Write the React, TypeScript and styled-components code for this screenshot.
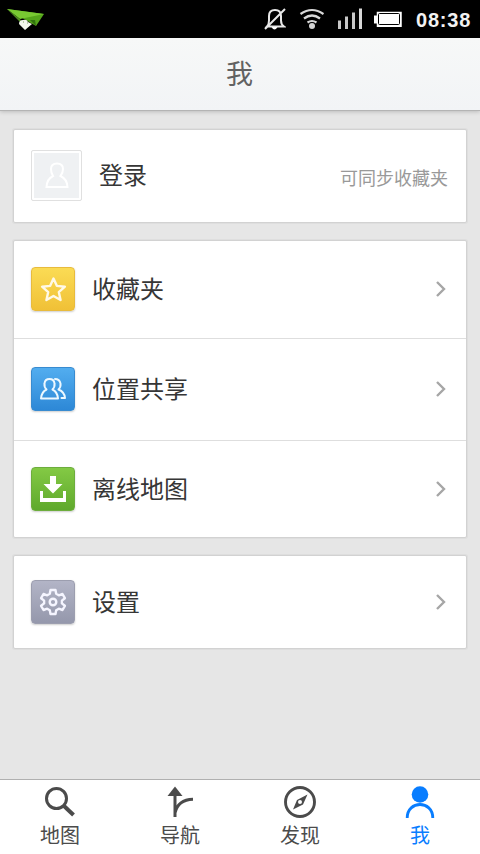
import React from "react";
import styled, { createGlobalStyle } from "styled-components";

const GlobalStyle = createGlobalStyle`
  * { box-sizing: border-box; }
  body {
    margin: 0;
    background: #e6e6e6;
    font-family: "Noto Sans CJK SC", "Noto Sans", sans-serif;
  }
  svg { display: block; flex: none; }
`;

const Screen = styled.div`
  display: flex;
  flex-direction: column;
  width: 480px;
  height: 854px;
  overflow: hidden;
  background: #e6e6e6;
`;

const StatusBar = styled.div`
  display: flex;
  align-items: center;
  justify-content: space-between;
  flex: none;
  height: 38px;
  padding: 0 9px 0 5px;
  background: #000;
`;

const StatusGroup = styled.div`
  display: flex;
  align-items: center;
`;

const StatusIcons = styled(StatusGroup)`
  gap: 12px;
`;

const Clock = styled.time`
  width: 55px;
  margin-left: 14px;
  padding-top: 2px;
  font: bold 20px/24px "Liberation Sans", Arial, sans-serif;
  letter-spacing: 0.8px;
  color: #f2f2f2;
  white-space: nowrap;
`;

const Header = styled.header`
  display: flex;
  align-items: center;
  justify-content: center;
  flex: none;
  height: 73px;
  padding: 0 1px 2px 0;
  background: linear-gradient(#f7f8f8, #f2f4f6);
  border-bottom: 1px solid #b4b4b4;
  box-shadow: 0 1px 4px rgba(0, 0, 0, 0.18);
`;

const Title = styled.h1`
  margin: 0;
  font-size: 27px;
  font-weight: 400;
  line-height: 36px;
  color: #626262;
`;

const Content = styled.main`
  display: flex;
  flex-direction: column;
  flex: 1;
  gap: 17px;
  padding: 18px 13px 0;
`;

const Card = styled.section`
  border: 1px solid #d2d2d2;
  border-radius: 2px;
  background: #fff;
  box-shadow: 0 0 0 1px #dedede;
`;

const Row = styled.div<{ $height: number; $lift: number }>`
  display: flex;
  align-items: center;
  height: ${(p) => p.$height}px;
  padding: 0 18px ${(p) => p.$lift}px 17px;

  & + & { border-top: 1px solid #dedede; }
`;

const Avatar = styled.div`
  display: flex;
  align-items: center;
  justify-content: center;
  width: 51px;
  height: 51px;
  margin-right: 17px;
  border: 1px solid #e0e0e0;
  border-radius: 2px;
  background: #eff1f3;
  box-shadow: inset 0 0 0 2px #fff;
`;

const Tile = styled.div<{ $from: string; $to: string; $edge: string }>`
  display: flex;
  align-items: center;
  justify-content: center;
  width: 44px;
  height: 44px;
  margin-right: 17px;
  border: 1px solid ${(p) => p.$edge};
  border-radius: 4px;
  background: linear-gradient(${(p) => p.$from}, ${(p) => p.$to}) border-box;
  box-shadow: 0 1px 2px rgba(0, 0, 0, 0.2);
`;

const Label = styled.span`
  flex: 1;
  padding-bottom: 2px;
  font-size: 24px;
  line-height: 34px;
  color: #363636;
`;

const Hint = styled.span`
  padding-top: 4px;
  font-size: 18px;
  line-height: 26px;
  color: #999;
`;

const TabBar = styled.nav`
  display: grid;
  grid-template-columns: repeat(4, 1fr);
  flex: none;
  height: 75px;
  border-top: 1px solid #b0b0b0;
  background: #fff;
`;

const Tab = styled.div<{ $active?: boolean }>`
  display: flex;
  flex-direction: column;
  align-items: center;
  padding-top: 4px;
  font-size: 20px;
  line-height: 28px;
  color: ${(p) => (p.$active ? "#087dff" : "#4b4b4b")};

  svg { margin-bottom: 1px; }
`;

const PlaneIcon = () => (
  <svg width="40" height="24" viewBox="0 0 40 24">
    <path d="M2 2 39 7 31 19 Z" fill="#54a41b" />
    <path d="M2 2 39 7 15 12 Z" fill="#78c832" />
    <path d="M2 2 15 12 22 22 Z" fill="#4f8c20" />
    <path d="M25 13 31 19 30 13 Z" fill="#31730e" />
    <path d="M14 17q0-4 4-4 4-1 5 2l4 2-7 6Z" fill="#f3f7ed" />
    <path d="M18 15h1M22 16h1" stroke="#83a568" />
  </svg>
);

const MutedBellIcon = () => (
  <svg width="22" height="24" viewBox="0 0 22 24" fill="none" stroke="#e8e8e8" strokeWidth="2">
    <path d="M3 19.500q2-2 2-6V9q0-6 6-6t6 6v4.500q0 4 3 6ZM1 22 21 2" />
    <path d="M7.500 20h6q-3 5-6 0Z" fill="#fff" stroke="none" />
  </svg>
);

const WifiIcon = () => (
  <svg width="26" height="24" viewBox="0 0 26 24" fill="none" stroke="#d8d8d8" strokeWidth="2.200">
    <path d="M2.500 7q11.500-8 23 0M6 11.500q8-6 16 0M9.500 15.500q4.500-3 9 0" />
    <circle cx="14" cy="19" r="3" fill="#d5d5d5" stroke="none" />
  </svg>
);

const SignalIcon = () => (
  <svg width="26" height="24" viewBox="0 0 26 24" fill="#c8c8c8">
    <rect x="2" y="13.500" width="3" height="8.500" />
    <rect x="9" y="9.500" width="3" height="12.500" />
    <rect x="16" y="5.500" width="3" height="16.500" />
    <rect x="23" y="1.500" width="3" height="20.500" fill="#d8d8d8" />
  </svg>
);

const BatteryIcon = () => (
  <svg width="28" height="16" viewBox="0 0 28 16">
    <rect x="2.750" y=".75" width="25" height="15.250" fill="#fff" />
    <path d="M0 4.500h3v8H0Z" fill="#fff" />
    <rect x="4.500" y="2.500" width="21" height="11" rx="1" fill="none" stroke="#000" />
  </svg>
);

const AvatarIcon = () => (
  <svg width="24" height="27" viewBox="0 0 24 27" fill="none" stroke="#fff" strokeWidth="2">
    <path d="M8 14Q6 11 6 7Q6 1.500 12 1.500Q18 1.500 18 7Q18 11 15.500 14Q22 17 22.500 25H1.500Q2 17 8 14Z" />
  </svg>
);

const StarIcon = () => (
  <svg width="27" height="27" viewBox="0 0 26 26" fill="none" stroke="#fff9e8" strokeWidth="2.300" strokeLinejoin="round">
    <path d="m13 2.500 3.200 7 7.800.8-5.900 5.200 1.700 7.700-6.800-4-6.800 4 1.700-7.700L2 10.300l7.800-.8Z" />
  </svg>
);

const PeopleIcon = () => (
  <svg width="28" height="24" viewBox="0 0 28 24" fill="none" stroke="#edf8ff" strokeWidth="2" strokeLinejoin="round" strokeLinecap="round">
    <path d="M7.500 12.500Q5 10 5.500 6.500Q6 2 10.500 2T15.500 6.500Q16 10 13.500 12.500Q18.500 15 19 21.500H2Q2.500 15 7.500 12.500Z" />
    <path d="M16 2Q20.500 2 21.500 6.500Q22 10 19.500 12.500Q25.500 15 26 21H22.500" />
  </svg>
);

const DownloadIcon = () => (
  <svg width="28" height="28" viewBox="0 0 28 28" fill="#fff">
    <path d="M11 1h6v8h6.500L14 18.500 4.500 9H11Z" />
    <path d="M1 16h3v7h20v-7h3v11H1Z" />
  </svg>
);

const GearIcon = () => (
  <svg width="28" height="28" viewBox="0 0 28 28" fill="none" stroke="#f5f5ff" strokeWidth="2.400" strokeLinejoin="round">
    <path d="M11.500 2h5l.7 3.800 2.600 1.500L23.500 6l2.400 4.200-3 2.400v2.800l3 2.400-2.400 4.200-3.700-1.300-2.600 1.500-.7 3.800h-5l-.7-3.800-2.600-1.500L4.500 22l-2.400-4.200 3-2.400v-2.800l-3-2.400L4.500 6l3.700 1.300 2.600-1.500Z" />
    <circle cx="14" cy="14" r="3.300" />
  </svg>
);

const Chevron = () => (
  <svg width="14" height="18" viewBox="0 0 14 18" fill="none" stroke="#a6a6a6" strokeWidth="2.400">
    <path d="m3 2 7 7-7 7" />
  </svg>
);

const SearchIcon = () => (
  <svg width="32" height="36" viewBox="0 0 32 36" fill="none" stroke="#4b4b4b">
    <circle cx="12.500" cy="14.500" r="10" strokeWidth="3" />
    <path d="m19.500 21.500 10 9.500" strokeWidth="4" />
  </svg>
);

const RouteIcon = () => (
  <svg width="32" height="36" viewBox="0 0 32 36" fill="none" stroke="#4b4b4b" strokeWidth="3">
    <path d="M11 33V8M11 29Q14 15.500 29 15.200" />
    <path d="m11 2.500 7.500 9.500h-15Z" fill="#4b4b4b" stroke="none" />
  </svg>
);

const CompassIcon = () => (
  <svg width="34" height="36" viewBox="0 0 34 36" fill="none" stroke="#4b4b4b">
    <circle cx="17" cy="18" r="14.500" strokeWidth="2.900" />
    <path fillRule="evenodd" d="m24.500 10.500-4.500 10L10 25.500l4-9.500ZM17 16a2 2 0 1 0 0 4 2 2 0 1 0 0-4Z" fill="#4b4b4b" stroke="none" />
  </svg>
);

const ProfileIcon = () => (
  <svg width="32" height="36" viewBox="0 0 32 36">
    <circle cx="16" cy="10.500" r="8.300" fill="#087dff" />
    <path d="M3.200 34C3.200 16 28.800 16 28.800 34" fill="none" stroke="#087dff" strokeWidth="2.800" />
  </svg>
);

export default function App() {
  return (
    <Screen>
      <GlobalStyle />
      <StatusBar>
        <PlaneIcon />
        <StatusGroup>
          <StatusIcons>
            <MutedBellIcon />
            <WifiIcon />
            <SignalIcon />
            <BatteryIcon />
          </StatusIcons>
          <Clock>08:38</Clock>
        </StatusGroup>
      </StatusBar>
      <Header>
        <Title>我</Title>
      </Header>
      <Content>
        <Card>
          <Row $height={92} $lift={2}>
            <Avatar><AvatarIcon /></Avatar>
            <Label>登录</Label>
            <Hint>可同步收藏夹</Hint>
          </Row>
        </Card>
        <Card>
          <Row $height={97} $lift={1}>
            <Tile $from="#fbdc55" $to="#f0c036" $edge="#e8bb3d"><StarIcon /></Tile>
            <Label>收藏夹</Label>
            <Chevron />
          </Row>
          <Row $height={102} $lift={1}>
            <Tile $from="#53aef0" $to="#2c87d6" $edge="#388bd0"><PeopleIcon /></Tile>
            <Label>位置共享</Label>
            <Chevron />
          </Row>
          <Row $height={97} $lift={0}>
            <Tile $from="#84ca45" $to="#5ea82c" $edge="#6dad3d"><DownloadIcon /></Tile>
            <Label>离线地图</Label>
            <Chevron />
          </Row>
        </Card>
        <Card>
          <Row $height={92} $lift={0}>
            <Tile $from="#b3b5c7" $to="#9497ab" $edge="#9c9eaf"><GearIcon /></Tile>
            <Label>设置</Label>
            <Chevron />
          </Row>
        </Card>
      </Content>
      <TabBar>
        <Tab><SearchIcon />地图</Tab>
        <Tab><RouteIcon />导航</Tab>
        <Tab><CompassIcon />发现</Tab>
        <Tab $active><ProfileIcon />我</Tab>
      </TabBar>
    </Screen>
  );
}
